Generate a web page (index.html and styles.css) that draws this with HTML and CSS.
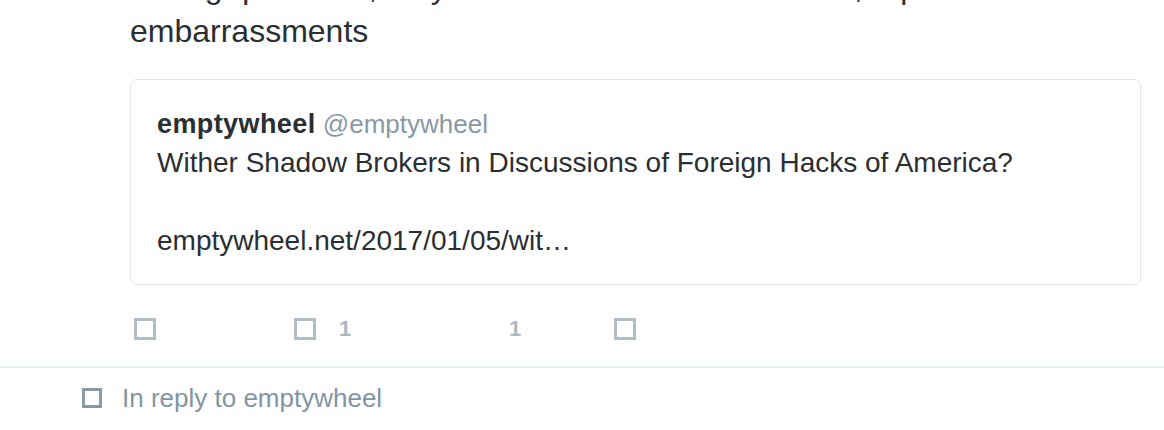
FILE: index.html
```html
<!DOCTYPE html>
<html>
<head>
<meta charset="utf-8">
<link rel="stylesheet" href="styles.css">
</head>
<body>
<div class="tweet">
  <p class="tweet-text">asking questions, they will leak intel about the hack, report more embarrassments</p>
  <div class="quote">
    <div class="quote-head"><span class="quote-name">emptywheel</span> <span class="quote-handle">@emptywheel</span></div>
    <div class="quote-body">Wither Shadow Brokers in Discussions of Foreign Hacks of America?<br><br>emptywheel.net/2017/01/05/wit…</div>
  </div>
  <div class="actions">
    <div class="action action-reply"><span class="icon-box"></span></div>
    <div class="action action-retweet"><span class="icon-box"></span><span class="count">1</span></div>
    <div class="action action-like"><span class="count">1</span></div>
    <div class="action action-dm"><span class="icon-box"></span></div>
  </div>
</div>
<div class="reply-context">
  <span class="icon-box icon-dark"></span>
  <span class="reply-label">In reply to emptywheel</span>
</div>
<div class="next-tweet">Marcy Wheeler @emptywheel</div>
</body>
</html>
```
FILE: styles.css
```css
html, body {
  margin: 0;
  padding: 0;
  background: #ffffff;
  overflow: hidden;
}
body {
  font-family: "Liberation Sans", Arial, sans-serif;
  color: #292f33;
  width: 1164px;
  height: 430px;
}
.tweet {
  padding: 0 23px 0 130px;
  border-bottom: 2px solid #e6ecf0;
}
.tweet-text {
  margin: -35px 0 0 0;
  font-size: 32px;
  line-height: 44px;
  color: #292f33;
}
.quote {
  margin-top: 26px;
  border: 1px solid #e1e8ed;
  border-radius: 7px;
  padding: 25px 26px 24px 26px;
}
.quote-head {
  font-size: 26px;
  line-height: 38px;
}
.quote-name {
  font-weight: bold;
  font-size: 27px;
  color: #292f33;
  letter-spacing: 0.4px;
}
.quote-handle {
  color: #8899a6;
}
.quote-body {
  font-size: 28px;
  line-height: 39px;
  color: #292f33;
}
.actions {
  display: flex;
  align-items: flex-start;
  height: 81px;
  padding-left: 4px;
  padding-top: 33px;
  box-sizing: border-box;
}
.action {
  display: flex;
  align-items: center;
  height: 22px;
  gap: 23px;
}
.action-reply { width: 160px; }
.action-retweet { width: 160px; }
.action-like { width: 160px; padding-left: 55px; box-sizing: border-box; }
.icon-box {
  display: inline-block;
  width: 22px;
  height: 22px;
  box-sizing: border-box;
  border: 3px solid #b1bdc6;
}
.count {
  font-size: 22px;
  font-weight: bold;
  color: #aab8c2;
}
.reply-context {
  display: flex;
  align-items: center;
  gap: 20px;
  padding: 10px 0 0 82px;
  height: 40px;
}
.icon-dark {
  width: 20px;
  height: 20px;
  border-color: #8899a6;
}
.reply-label {
  font-size: 26px;
  color: #8195a4;
}
.next-tweet {
  padding: 0 0 0 130px;
  font-size: 26px;
  line-height: 26px;
  color: #8899a6;
  margin-top: 9px;
}
```
